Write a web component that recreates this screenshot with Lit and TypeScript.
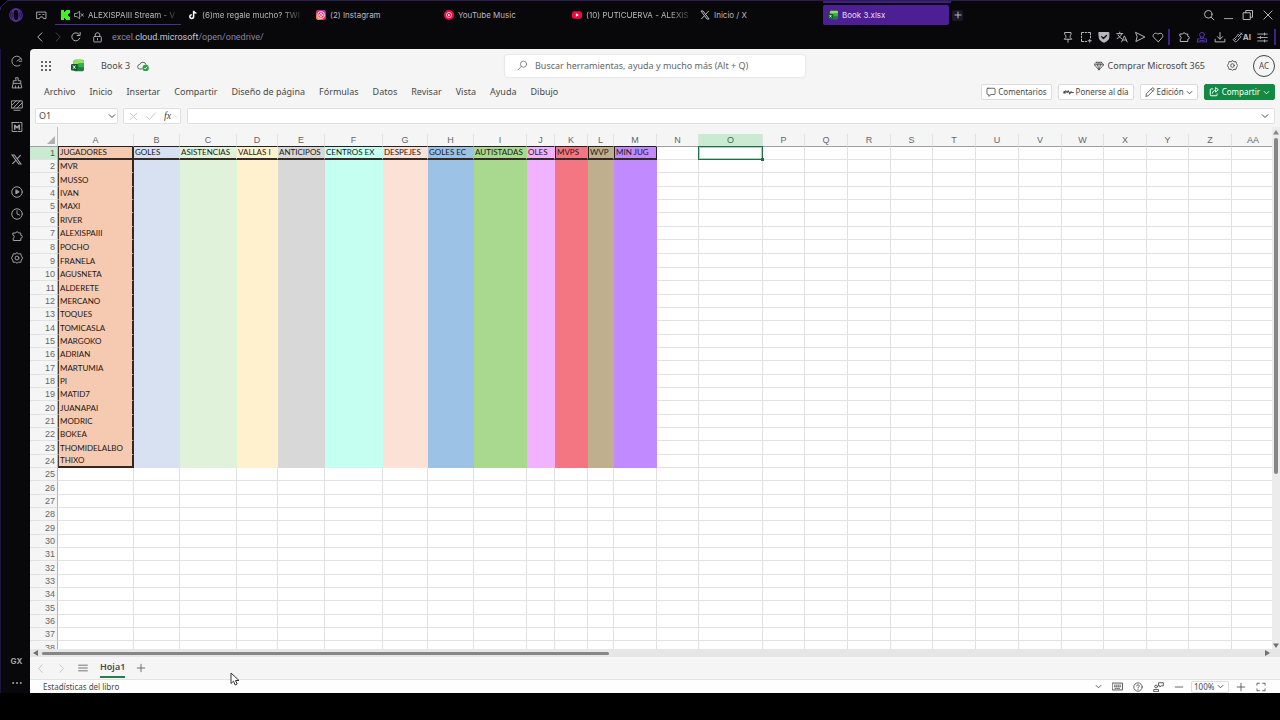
import { LitElement, html, svg, css, nothing, type SVGTemplateResult } from "lit";
import { customElement, state } from "lit/decorators.js";
import { classMap } from "lit/directives/class-map.js";
import { styleMap } from "lit/directives/style-map.js";

// Line icons share a 16 unit grid and take the colour of their text.
const icon = (body: SVGTemplateResult, size = 12, stroke = 1.3) => html`<svg
  class="icon"
  width=${size}
  height=${size}
  viewBox="0 0 16 16"
  fill="none"
  stroke="currentColor"
  stroke-width=${stroke}
  stroke-linecap="round"
  stroke-linejoin="round"
  aria-hidden="true"
>${body}</svg>`;

const PUZZLE = svg`<path d="M3 4h3.2a2 2 0 0 1 3.9 0H13v3a2 2 0 0 1 0 4v3H3v-3.2a2 2 0 0 0 0-3.8z"/>`;

const I = {
  opera: svg`<circle cx="8" cy="8" r="7.2"/><ellipse cx="8" cy="8" rx="3.4" ry="6.6"/><ellipse cx="8" cy="8" rx="5" ry="7"/>`,
  workspace: svg`<path d="M1.5 3h13v9.500h-3.500L9.500 10h-3L5 12.500H1.500z"/><path d="M4.500 6.500h1.500M10 6.500h1.500"/>`,
  mute: svg`<path d="M1.500 5.500h3L9 2v12L4.500 10.500h-3zM11.500 6l3.500 4M15 6l-3.500 4"/>`,
  back: svg`<path d="M10.500 2.500L5 8l5.500 5.500"/>`,
  forward: svg`<path d="M5.500 2.500L11 8l-5.500 5.500"/>`,
  reload: svg`<path d="M13 9.500A5.400 5.400 0 1 1 12 4.300M13.500 2v4h-4"/>`,
  lock: svg`<rect x="2.500" y="6.500" width="11" height="8" rx="1"/><path d="M4.800 6.500V4.200a3.200 3.200 0 0 1 6.400 0v2.300M8 9.500v2"/>`,
  search: svg`<circle cx="7" cy="7" r="5"/><path d="M11 11l3.500 3.500"/>`,
  find: svg`<circle cx="9.500" cy="6" r="4.500"/><path d="M6.300 9.300L1.500 14.300"/>`,
  minimize: svg`<path d="M2 12.500h12"/>`,
  restore: svg`<rect x="2" y="5" width="9" height="9"/><path d="M5 5V2h9v9h-3"/>`,
  close: svg`<path d="M2.500 2.500l11 11M13.500 2.500l-11 11"/>`,
  plus: svg`<path d="M8 2v12M2 8h12"/>`,
  minus: svg`<path d="M2 8h12"/>`,
  pin: svg`<path d="M4 2h8v3l-1.200 1v2.500L13 11H3l2.200-2.500V6L4 5zM8 11v4"/>`,
  snap: svg`<path d="M2 5V2h3M7 2h2M11 2h3v3M14 7v2M2 7v2M2 11v3h3M7 14h2M11 13h4M13 11v4"/>`,
  shield: svg`<path d="M1.500 2h13v6c0 4-3.500 6-6.500 7-3-1-6.500-3-6.500-7z" fill="currentColor"/><path d="M4.800 7.500l2.500 2.500 4-4" stroke="#0a0a0c" stroke-width="1.800"/>`,
  translate: svg`<path d="M1 3.500h8M5 1.500v2M7.500 3.500C7 7 4 9 1.500 10M3 5.500c1 2 2.500 3.500 4.500 4.500M7.500 14.500l3.700-8 3.700 8M8.700 12h5"/>`,
  send: svg`<path d="M2.500 2l12 6-12 6 1.500-6z"/>`,
  heart: svg`<path d="M8 14.200L2.300 8.600C-.6 5.300 4.200.4 8 4.400c3.800-4 8.600.9 5.700 4.200z"/>`,
  puzzle: PUZZLE,
  person: svg`<circle cx="8" cy="5" r="3.200"/><path d="M6 8.500v1.500h4V8.500M2 14.500v-4h2.500M14 14.500v-4h-2.500M2 14.500h12M5 12.500h6"/>`,
  download: svg`<path d="M8 2v8.500M4.500 7.500L8 11l3.500-3.500M1.500 11v3.500h13V11"/>`,
  brush: svg`<path d="M14.500 1.500L9 7M12 1l3 3M9.500 3.500l3.500 3.500-3 3c-1 2-3 4-5 4.500L1.500 11C3 10.500 5 8 6.500 6.500zM4 12l2-2"/>`,
  sliders: svg`<path d="M1 3h14M1 8h14M1 13h14M11 1.500v3M5 6.500v3M11 11.500v3"/>`,
  gauge: svg`<path d="M12 13.500A6.700 6.700 0 1 1 14.200 6M8 8l5-3.500M11 8.500l3.500-.5"/>`,
  broom: svg`<path d="M6.500 1h3v4H13v3.500H3V5h3.500zM3 8.500l-1.500 6h12l1 0-1.500-6M6 14.500v-2.500M10 14.500v-2.500"/>`,
  wallpaper: svg`<rect x="1" y="2.500" width="14" height="9.500"/><path d="M1.500 8L7 2.500M3 12l9-9.500M8 12l6.500-6.500M4 15h8"/>`,
  mods: svg`<rect x="1.500" y="2" width="13" height="12" stroke-dasharray="9 1.500"/><path d="M5 11V5.500l3 3.500 3-3.500V11" stroke-width="2"/>`,
  play: svg`<circle cx="8" cy="8" r="7"/><path d="M6.500 5.500v5l4-2.500z" fill="currentColor"/>`,
  clock: svg`<circle cx="8" cy="8" r="7"/><path d="M8 3.500V8l3.500 1.500"/>`,
  hexgear: svg`<path d="M8 1l2 1.500 3-.2.800 3L15.500 8l-1.700 2.700-.8 3-3-.2L8 15l-2-1.500-3 .2-.8-3L.5 8l1.700-2.700.8-3 3 .2z"/><circle cx="8" cy="8" r="2.600"/>`,
  chevron: svg`<path d="M2.500 5.500L8 11l5.500-5.500"/>`,
  cancel: svg`<path d="M2 2l12 12M14 2L2 14"/>`,
  accept: svg`<path d="M1 9l4.500 4.500L15 3"/>`,
  diamond: svg`<path d="M4 2h8l3.500 4L8 14.500.5 6zM.5 6h15M5.500 6L8 14M10.500 6L8 14M4 2l1.500 4L8 2l2.500 4L12 2"/>`,
  comment: svg`<path d="M3 2h10a1.500 1.500 0 0 1 1.500 1.500v7A1.500 1.500 0 0 1 13 12H8l-3.500 3v-3H3a1.500 1.500 0 0 1-1.500-1.500v-7A1.500 1.500 0 0 1 3 2z"/>`,
  catchup: svg`<path d="M1 8.500L4 5.500l2 2.500 1.500-2.500L10 10l1.500-3 1.500 1h2M1.500 6.500v2h2"/>`,
  pencil: svg`<path d="M1.500 14.500l1-4L11 2a1.700 1.700 0 0 1 3 3l-8.500 8.500zM9.500 3.500l3 3"/>`,
  share: svg`<path d="M6 3H3.500A1.500 1.500 0 0 0 2 4.500v8A1.500 1.500 0 0 0 3.500 14h8a1.500 1.500 0 0 0 1.500-1.500V11M5.500 10c.5-3 2-4.500 5-4.500V8L15 4.500 10.500 1v2.500"/>`,
  menu: svg`<path d="M1 3.500h14M1 8h14M1 12.500h14"/>`,
  keyboard: svg`<rect x=".8" y="3" width="14.400" height="10"/><path d="M3.500 6h9M3.500 8.300h9M4.500 10.700h7" stroke-dasharray="1.200 1.400"/>`,
  help: svg`<circle cx="8" cy="8" r="6.700"/><path d="M6 6.300a2 2 0 1 1 2.800 2c-.6.400-.8.700-.8 1.300M8 11.700v.2"/>`,
  feedback: svg`<circle cx="4.500" cy="8" r="2"/><path d="M1 15v-2.500h7V15zM8.500 2.500h6.500V7h-3l-2 1.700V7H8.500z"/>`,
  fullscreen: svg`<path d="M1.500 5V2h4M10.500 2h4v3M14.500 11v3h-4M5.500 14h-4v-3"/>`,
};

const excelLogo = (size: number) => html`<svg class="icon" width=${size} height=${size} viewBox="0 0 16 16" aria-hidden="true">
  <rect x="3" y="1" width="13" height="14" rx="2" fill="#1f7a3d" />
  <path d="M5 1h9a2 2 0 0 1 2 2v3H3V3a2 2 0 0 1 2-2z" fill="#8fe05a" />
  <path d="M9 5h7v5H9z" fill="#35b04b" />
  <rect x="0" y="6" width="8" height="8" rx="1.500" fill="#0f5a30" />
  <path d="M2.500 8l3 4M5.500 8l-3 4" stroke="#fff" stroke-width="1.200" />
</svg>`;

const xLogo = (size: number) => html`<svg class="icon" width=${size} height=${size} viewBox="0 0 16 16" fill="none" stroke="currentColor" aria-hidden="true">
  <path d="M1.500 1.500h3.300l9.700 13h-3.300z" stroke-width="1.600" /><path d="M14 1.500L9 7M7 9.300L2 14.500" stroke-width="1.600" />
</svg>`;

const FAVICONS = {
  kick: html`<svg class="icon" width="10" height="10" viewBox="0 0 10 10"><path d="M1 0h3v2h1V1h1V0h4v3H9v1H8v2h1v1h1v3H6V9H5V8H4v2H1z" fill="#3df51c" /></svg>`,
  tiktok: html`<svg class="icon" width="10" height="10" viewBox="0 0 16 16" fill="none" stroke-width="2.400">
    <path d="M9 1v9.500a3 3 0 1 1-3-3M9 1.500c.5 2.500 2 3.500 4.500 3.500" stroke="#fff" /></svg>`,
  instagram: html`<svg class="icon" width="10" height="10" viewBox="0 0 16 16">
    <defs><linearGradient id="ig" x1="0" y1="1" x2="1" y2="0"><stop offset="0" stop-color="#ffb640" /><stop offset=".45" stop-color="#f0235c" /><stop offset="1" stop-color="#a32ae0" /></linearGradient></defs>
    <rect width="16" height="16" rx="3.500" fill="url(#ig)" /><g fill="none" stroke="#fff" stroke-width="1.500"><rect x="3" y="3" width="10" height="10" rx="3" /><circle cx="8" cy="8" r="2.300" /></g></svg>`,
  ytmusic: html`<svg class="icon" width="10" height="10" viewBox="0 0 16 16"><circle cx="8" cy="8" r="8" fill="#f4084a" /><circle cx="8" cy="8" r="4.200" fill="none" stroke="#fff" /><path d="M6.700 5.800v4.400L10.200 8z" fill="#fff" /></svg>`,
  youtube: html`<svg class="icon" width="10" height="10" viewBox="0 0 16 16"><rect y="2" width="16" height="12" rx="3.500" fill="#f5063f" /><path d="M6.200 5.200v5.600L11 8z" fill="#fff" /></svg>`,
  x: xLogo(10),
  excel: excelLogo(10),
};

interface Tab {
  icon: keyof typeof FAVICONS;
  title: string;
  muted?: boolean;
  marked?: boolean;
  faded?: boolean;
  active?: boolean;
}

const TABS: Tab[] = [
  { icon: "kick", title: "ALEXISPAIII Stream - V", muted: true, marked: true, faded: true },
  { icon: "tiktok", title: "(6)me regale mucho? TWI", faded: true },
  { icon: "instagram", title: "(2) Instagram" },
  { icon: "ytmusic", title: "YouTube Music" },
  { icon: "youtube", title: "(10) PUTICUERVA - ALEXIS", faded: true },
  { icon: "x", title: "Inicio / X" },
  { icon: "excel", title: "Book 3.xlsx", active: true },
];

const MENUS = ["Archivo", "Inicio", "Insertar", "Compartir", "Diseño de página", "Fórmulas", "Datos", "Revisar", "Vista", "Ayuda", "Dibujo"];

interface Column {
  id: string;
  width: number;
  title?: string;
  fill?: string;
  boxed?: boolean;
}

const COLUMNS: Column[] = [
  { id: "A", width: 76, title: "JUGADORES", fill: "#f5cab1" },
  { id: "B", width: 46, title: "GOLES", fill: "#d8e1f1" },
  { id: "C", width: 57, title: "ASISTENCIAS", fill: "#e1f2da" },
  { id: "D", width: 41, title: "VALLAS I", fill: "#fff1cd" },
  { id: "E", width: 47, title: "ANTICIPOS", fill: "#d8d8d8" },
  { id: "F", width: 58, title: "CENTROS EX", fill: "#c4fff2" },
  { id: "G", width: 45, title: "DESPEJES", fill: "#fbe1d6" },
  { id: "H", width: 46, title: "GOLES EC", fill: "#9cc3e6" },
  { id: "I", width: 53, title: "AUTISTADAS", fill: "#a8d98f" },
  { id: "J", width: 28, title: "OLES", fill: "#f1b2ff" },
  { id: "K", width: 33, title: "MVPS", fill: "#f57683", boxed: true },
  { id: "L", width: 26, title: "WVP", fill: "#bfaf8f", boxed: true },
  { id: "M", width: 43, title: "MIN JUG", fill: "#c18aff", boxed: true },
  { id: "N", width: 42 },
  { id: "O", width: 64 },
  { id: "P", width: 42 },
  { id: "Q", width: 43 },
  { id: "R", width: 43 },
  { id: "S", width: 42 },
  { id: "T", width: 43 },
  { id: "U", width: 43 },
  { id: "V", width: 43 },
  { id: "W", width: 42 },
  { id: "X", width: 43 },
  { id: "Y", width: 42 },
  { id: "Z", width: 43 },
  { id: "AA", width: 43 },
];
const STUB = 28;
const TOTAL = COLUMNS.reduce((sum, c) => sum + c.width, STUB);

const PLAYERS = [
  "MVR", "MUSSO", "IVAN", "MAXI", "RIVER", "ALEXISPAIII", "POCHO", "FRANELA", "AGUSNETA", "ALDERETE", "MERCANO", "TOQUES",
  "TOMICASLA", "MARGOKO", "ADRIAN", "MARTUMIA", "PI", "MATID7", "JUANAPAI", "MODRIC", "BOKEA", "THOMIDELALBO", "THIXO",
];
const LAST_ROW = PLAYERS.length + 1;
const ROWS = Array.from({ length: 38 }, (_, i) => i + 1);

@customElement("sheet-grid")
class SheetGrid extends LitElement {
  static styles = css`
    :host {
      display: block;
      overflow: hidden;
      padding-top: 7px;
      background: #f5f5f5;
    }
    table {
      table-layout: fixed;
      border-collapse: separate;
      border-spacing: 0;
      background: #fff;
      font: 8px/12px Lato, Carlito, sans-serif;
      color: #1d1712;
    }
    th, td {
      box-sizing: border-box;
      height: 13px;
      padding: 0;
      white-space: nowrap;
      border: 0 solid #e2e2e2;
      border-width: 0 1px 1px 0;
    }
    th {
      background: #f5f5f5;
      color: #666;
      font: 9px/12px "Liberation Sans", Arial, sans-serif;
    }
    thead th { border-bottom-color: #a0a0a0; }
    thead .used { border-bottom-color: #222; }
    .row:nth-child(-n + 9):nth-child(3n) > *,
    .row:nth-child(n + 8):nth-child(3n + 2) > * { height: 14px; }
    .corner { position: relative; border-right-color: #bdbdbd; }
    .corner::before {
      content: "";
      position: absolute;
      right: -1px;
      bottom: 100%;
      width: 1px;
      height: 7px;
      background: #bdbdbd;
    }
    .corner svg { display: block; margin-left: auto; margin-right: 2px; }
    .num { text-align: right; padding-right: 2px; border-right-color: #b4b4b4; }
    .on { background: #caead2; color: #35704b; }
    thead .on { border-bottom-color: #1d7044; }
    td { padding-left: 1px; }
    .filled { border-color: transparent; }
    .head { border-bottom: 2px solid #332a26; line-height: 11px; }
    .boxed { border-left: 1px solid #222; }
    .boxed.end { border-right: 1px solid #222; }
    .name { border-left: 1px solid #4a3a33; border-right: 2px solid #33261f; }
    .name.last { border-bottom: 2px solid #33261f; line-height: 11px; }
    .cursor { position: relative; }
    .cursor::after, .cursor::before { content: ""; position: absolute; }
    .cursor::after { inset: -1px -1px -1px -1px; border: 1px solid #1d7044; box-shadow: inset 0 0 0 1px #1d704455; }
    .cursor::before { right: -2px; bottom: -2px; width: 3px; height: 3px; background: #1d7044; }
  `;

  private cell(col: Column, c: number, row: number) {
    const filled = Boolean(col.fill) && row <= LAST_ROW;
    const text = row === 1 ? col.title : c === 0 ? PLAYERS[row - 2] : undefined;
    const classes = {
      filled,
      head: row === 1 && filled,
      boxed: row === 1 && Boolean(col.boxed),
      end: col.id === "M",
      name: c === 0 && filled,
      last: row === LAST_ROW,
      cursor: row === 1 && col.id === "O",
    };
    return html`<td class=${classMap(classes)} style=${filled ? styleMap({ backgroundColor: col.fill! }) : nothing}>${text ?? nothing}</td>`;
  }

  render() {
    return html`<table aria-label="Hoja1" style=${styleMap({ width: `${TOTAL}px` })}>
      <colgroup>
        <col style=${styleMap({ width: `${STUB}px` })} />
        ${COLUMNS.map((c) => html`<col style=${styleMap({ width: `${c.width}px` })} />`)}
      </colgroup>
      <thead>
        <tr>
          <th class="corner"><svg width="8" height="8" viewBox="0 0 8 8"><path d="M8 0v8H0z" fill="#b0b0b0" /></svg></th>
          ${COLUMNS.map((c) => html`<th scope="col" class=${classMap({ on: c.id === "O", used: !!c.fill })}>${c.id}</th>`)}
        </tr>
      </thead>
      <tbody>
        ${ROWS.map(
          (r) => html`<tr class="row">
            <th scope="row" class=${classMap({ num: true, on: r === 1 })}>${r}</th>
            ${COLUMNS.map((col, c) => this.cell(col, c, r))}
          </tr>`,
        )}
      </tbody>
    </table>`;
  }
}

@customElement("app-root")
class AppRoot extends LitElement {
  @state() private cellRef = "O1";

  static styles = css`
    :host {
      display: block;
      height: 100vh;
      overflow: hidden;
      background: #000;
      font-family: "Noto Sans", "Segoe UI", sans-serif;
      font-size: 9px;
      line-height: 12px;
      color: #444;
    }
    * { box-sizing: border-box; }
    button, input, select { font: inherit; color: inherit; background: none; border: 0; padding: 0; margin: 0; }
    button { display: inline-flex; align-items: center; justify-content: center; white-space: nowrap; }
    a { color: inherit; text-decoration: none; }
    .icon { display: block; flex: none; }
    .window {
      position: relative;
      display: grid;
      grid-template: 49px minmax(0, 1fr) / 30px minmax(0, 1fr);
      height: calc(100vh - 27px);
      background: #08080a;
      color: #b9b8bf;
    }
    .edge { position: absolute; inset: 0 auto auto 0; pointer-events: none; }
    .chrome {
      grid-column: 1 / -1;
      display: grid;
      grid-template-rows: 25px 22px;
      border-top: 1px solid #2c1c52;
      font: 8px/12px Inter, sans-serif;
    }
    .strip, .address { display: flex; align-items: center; min-width: 0; }
    .strip { padding: 3px 6px 0 9px; }
    .brand { color: #5a2fa8; width: 14px; margin-right: 12px; }
    .space { width: 12px; margin-right: 8px; }
    .tabs { display: flex; flex: 0 1 896px; min-width: 0; height: 20px; margin: 0; padding: 0; list-style: none; }
    .tab { position: relative; flex: 0 1 128px; min-width: 0; padding-right: 2px; }
    .tab a { display: flex; align-items: center; gap: 4px; height: 20px; padding: 0 0 0 5px; }
    .tab .title { min-width: 0; overflow: hidden; white-space: nowrap; }
    .faded .title { mask-image: linear-gradient(90deg, #000 80%, #0004); }
    .marked a { border-bottom: 1px solid #43309a; }
    .active a { background: #4c1f95; color: #e6def5; border-radius: 2px; }
    .active::before { content: ""; position: absolute; inset: -4px 0 auto 0; height: 2px; background: #3f1f86; }
    .newtab { width: 11px; height: 11px; margin-left: 1px; background: #1b1726; border-radius: 2px; }
    .controls { display: flex; gap: 8px; margin-left: auto; }
    .address { padding: 0 4px 0 34px; }
    .nav { display: flex; gap: 6px; margin-right: 10px; }
    .dim { opacity: 0.35; }
    .lock { margin-right: 9px; }
    .url { flex: 1; min-width: 0; font: 9px/12px Roboto, sans-serif; color: #8b87a0; }
    .url b { font-weight: 400; color: #c9c8d0; }
    .tools { display: flex; align-items: center; gap: 6px; }
    .bar { width: 2px; height: 16px; background: #3b238a; }
    .bar.mid { margin-right: 2px; margin-left: -2px; }
    .purple { color: #5330b5; }
    .ai { gap: 0; font: 700 8px/12px Inter, sans-serif; }
    .side { display: flex; flex-direction: column; align-items: center; gap: 10px; padding: 6px 0 4px 2px; border-left: 1px solid #1d1440; color: #a3a2a9; }
    .side .apart { margin-top: 11px; }
    .side .gx { margin-top: auto; font: 700 8px/12px Inter, sans-serif; }
    .page { display: flex; flex-direction: column; min-height: 0; min-width: 0; background: #f5f5f5; border-top-left-radius: 4px; overflow: hidden; color: #484848; }
    .titlebar { display: grid; grid-template-columns: 1fr 300px 1fr; align-items: center; height: 33px; padding: 0 5px; }
    .file { display: flex; align-items: center; padding-left: 5px; }
    .waffle { margin-right: 19px; }
    .file .doc { margin: 0 7px 0 17px; }
    .search { display: flex; align-items: center; gap: 7px; height: 22px; padding: 0 12px; background: #fff; border-radius: 3px; box-shadow: 0 0 2px #00000030; color: #777; }
    .search input { flex: 1; min-width: 0; outline: 0; }
    .search input::placeholder { color: #666; opacity: 1; }
    .account { display: flex; align-items: center; justify-content: flex-end; }
    .buy { gap: 4px; margin-right: 22px; }
    .avatar { width: 22px; height: 22px; margin-left: 15px; border: 1px solid #444; border-radius: 50%; font-size: 8px; }
    .ribbon { display: flex; align-items: center; justify-content: space-between; height: 20px; padding: 0 5px 0 14px; }
    .menus { display: flex; gap: 14px; white-space: nowrap; }
    .actions { display: flex; gap: 6px; font-size: 8px; }
    .actions button { height: 16px; gap: 2px; padding: 0 4px; border: 1px solid #dcdcdc; border-radius: 2px; background: #fff; }
    .actions .share { gap: 3px; background: #138a43; border-color: #138a43; color: #fff; }
    .formula { display: flex; padding: 6px 5px 3px; }
    .box { display: flex; align-items: center; height: 16px; background: #fff; border: 1px solid #e0e0e0; border-radius: 2px; }
    .ref { width: 83px; padding: 0 1px 0 3px; }
    .ref input { flex: 1; min-width: 0; outline: 0; }
    .fx { width: 58px; margin: 0 6px 0 5px; padding: 0 5px; gap: 8px; color: #bbb; }
    .fx i { color: #444; font-family: "Liberation Serif", serif; font-size: 10px; }
    .fx .pair { gap: 3px; }
    .text { flex: 1; padding-right: 5px; }
    .text input { flex: 1; outline: 0; }
    .sheet { flex: 1; min-height: 0; display: grid; grid-template: minmax(0, 1fr) 8px / minmax(0, 1fr) 8px; background: #e6e6e6; }
    .vbar { display: flex; flex-direction: column; align-items: center; gap: 3px; padding: 3px 0 1px; background: #ececec; }
    .hbar { grid-column: 1 / -1; display: flex; align-items: center; gap: 4px; padding: 0 10px 0 3px; }
    .track { flex: 1; min-height: 0; }
    .thumb { background: #868686; border-radius: 2px; }
    .hbar .thumb { width: 46.5%; height: 3px; }
    .vbar .thumb { width: 4px; height: 67%; }
    .sheets { display: flex; align-items: center; height: 22px; padding-left: 5px; }
    .sheets .icon { color: #555; }
    .sheets .faint .icon { color: #c4c4c4; }
    .faint { margin-right: 10px; }
    .faint + :not(.faint) { margin-left: 1px; }
    .current { margin: 0 11px 0 12px; height: 20px; border-bottom: 2px solid #2a7d4f; font-weight: 600; }
    .status { display: flex; align-items: center; justify-content: space-between; height: 14px; padding: 0 14px 0 13px; background: #fefefe; border-top: 1px solid #e4e4e4; font-size: 8px; }
    .view { display: flex; align-items: center; gap: 10px; }
    .zoom { position: relative; display: flex; align-items: center; width: 38px; height: 12px; margin: 0 -3px; border: 1px solid #ddd; border-radius: 2px; }
    .zoom select { appearance: none; width: 100%; padding-left: 2px; outline: 0; }
    .zoom .icon { position: absolute; right: 4px; pointer-events: none; }
    .pointer { position: absolute; left: 230px; top: 672px; pointer-events: none; }
  `;

  private tool(body: SVGTemplateResult, label: string, size = 12, cls = "", stroke = 1.3) {
    return html`<button class=${cls} aria-label=${label}>${icon(body, size, stroke)}</button>`;
  }

  private chrome() {
    return html`<header class="chrome">
      <div class="strip">
        <button class="brand" aria-label="Opera GX">${icon(I.opera, 14, 1.2)}</button>
        <button class="space" aria-label="Espacios">${icon(I.workspace, 11)}</button>
        <ul class="tabs">
          ${TABS.map(
            (t) => html`<li class=${classMap({ tab: true, marked: !!t.marked, faded: !!t.faded, active: !!t.active })}>
              <a href="#">${FAVICONS[t.icon]}${t.muted ? icon(I.mute, 10) : nothing}<span class="title">${t.title}</span></a>
            </li>`,
          )}
        </ul>
        <button class="newtab" aria-label="Nueva pestaña">${icon(I.plus, 8, 2)}</button>
        <div class="controls">
          ${this.tool(I.search, "Buscar")}${this.tool(I.minimize, "Minimizar", 11)}${this.tool(I.restore, "Restaurar")}${this.tool(I.close, "Cerrar")}
        </div>
      </div>
      <div class="address">
        <div class="nav">
          ${this.tool(I.back, "Atrás")}${this.tool(I.forward, "Adelante", 12, "dim")}${this.tool(I.reload, "Recargar")}
        </div>
        <span class="lock">${icon(I.lock, 11)}</span>
        <span class="url">excel.<b>cloud.microsoft</b>/open/onedrive/</span>
        <div class="tools">
          ${this.tool(I.pin, "Fijar")}${this.tool(I.snap, "Captura")}${this.tool(I.shield, "Protección")}${this.tool(I.translate, "Traducir")}${this.tool(I.send, "Enviar")}${this.tool(I.heart, "Favoritos")}
          <span class="bar mid"></span>
          ${this.tool(I.puzzle, "Extensiones")}${this.tool(I.person, "Perfil", 12, "purple")}${this.tool(I.download, "Descargas")}
          <button class="ai">${icon(I.brush, 11)}AI</button>
          ${this.tool(I.sliders, "Ajustes rápidos", 11)}
          <span class="bar"></span>
        </div>
      </div>
    </header>`;
  }

  private side() {
    return html`<nav class="side" aria-label="Barra lateral">
      ${this.tool(I.gauge, "GX Control")}${this.tool(I.broom, "GX Cleaner")}${this.tool(I.wallpaper, "Fondos")}${this.tool(I.mods, "Mods")}
      <button class="apart" aria-label="X">${xLogo(11)}</button>
      ${this.tool(I.play, "Reproductor", 12, "apart")}${this.tool(I.clock, "Historial")}${this.tool(I.puzzle, "Extensiones")}${this.tool(I.hexgear, "Configuración")}
      <button class="gx">GX</button>
      <button aria-label="Más"><svg class="icon" width="10" height="12" viewBox="0 0 10 12" fill="currentColor"><circle cx="1.200" cy="6" r="1" /><circle cx="5" cy="6" r="1" /><circle cx="8.800" cy="6" r="1" /></svg></button>
    </nav>`;
  }

  private page() {
    return html`<main class="page">
      <div class="titlebar">
        <div class="file">
          <button class="waffle" aria-label="Aplicaciones"><svg class="icon" width="12" height="12" viewBox="0 0 12 12" fill="#333">
            ${[1, 5, 9].map((y) => [1, 5, 9].map((x) => svg`<rect x=${x} y=${y} width="2" height="2" rx="1" />`))}
          </svg></button>
          ${excelLogo(13)}
          <span class="doc">Book 3</span>
          <svg class="icon" width="12" height="12" viewBox="0 0 16 16" fill="none" aria-hidden="true">
            <path d="M7 12H4a3 3 0 0 1-.3-6A4.300 4.300 0 0 1 12 6.200" stroke="#555" stroke-width="1.200" />
            <circle cx="11.500" cy="10.500" r="4.300" fill="#2ba245" /><path d="M9.500 10.500l1.500 1.500 2.500-3" stroke="#fff" stroke-width="1.200" />
          </svg>
        </div>
        <label class="search">${icon(I.find, 11, 1.2)}<input type="search" aria-label="Buscar" placeholder="Buscar herramientas, ayuda y mucho más (Alt + Q)" /></label>
        <div class="account">
          <button class="buy">${icon(I.diamond, 10)}Comprar Microsoft 365</button>
          ${this.tool(I.hexgear, "Configuración", 11)}
          <button class="avatar">AC</button>
        </div>
      </div>
      <div class="ribbon">
        <nav class="menus">${MENUS.map((m) => html`<button>${m}</button>`)}</nav>
        <div class="actions">
          <button>${icon(I.comment, 10)}Comentarios</button>
          <button>${icon(I.catchup, 11, 1.6)}Ponerse al día</button>
          <button>${icon(I.pencil, 10)}Edición${icon(I.chevron, 7, 2)}</button>
          <button class="share">${icon(I.share, 10, 1.6)}Compartir${icon(I.chevron, 7, 2)}</button>
        </div>
      </div>
      <div class="formula">
        <div class="box ref">
          <input aria-label="Cuadro de nombres" .value=${this.cellRef} @input=${(e: InputEvent) => (this.cellRef = (e.target as HTMLInputElement).value)} />
          ${this.tool(I.chevron, "Nombres", 8, "", 2)}
        </div>
        <div class="box fx">
          ${this.tool(I.cancel, "Cancelar", 9)}${this.tool(I.accept, "Aceptar", 10)}
          <button class="pair" aria-label="Insertar función"><i>fx</i>${icon(I.chevron, 5)}</button>
        </div>
        <div class="box text"><input aria-label="Barra de fórmulas" />${this.tool(I.chevron, "Expandir", 8, "", 2)}</div>
      </div>
      <div class="sheet">
        <sheet-grid></sheet-grid>
        <div class="vbar">
          <svg width="6" height="5" viewBox="0 0 6 5"><path d="M0 4.500h6L3 0z" fill="#868686" /></svg>
          <div class="track"><div class="thumb"></div></div>
          <svg width="6" height="5" viewBox="0 0 6 5"><path d="M0 .5h6L3 5z" fill="#707070" /></svg>
        </div>
        <div class="hbar">
          <svg width="5" height="6" viewBox="0 0 5 6"><path d="M5 0v6L0 3z" fill="#707070" /></svg>
          <div class="track"><div class="thumb"></div></div>
          <svg width="5" height="6" viewBox="0 0 5 6"><path d="M0 0v6l5-3z" fill="#707070" /></svg>
        </div>
      </div>
      <div class="sheets">
        ${this.tool(I.back, "Anterior", 11, "faint")}${this.tool(I.forward, "Siguiente", 11, "faint")}${this.tool(I.menu, "Todas las hojas", 10)}
        <button class="current">Hoja1</button>
        ${this.tool(I.plus, "Nueva hoja", 10)}
      </div>
      <footer class="status">
        <span>Estadísticas del libro</span>
        <div class="view">
          ${this.tool(I.chevron, "Opciones", 7, "", 2)}${this.tool(I.keyboard, "Teclado", 11)}${this.tool(I.help, "Ayuda", 10)}${this.tool(I.feedback, "Comentarios", 11)}${this.tool(I.minus, "Alejar", 10)}
          <div class="zoom"><select aria-label="Zoom"><option>100%</option></select>${icon(I.chevron, 7, 2)}</div>
          ${this.tool(I.plus, "Acercar", 10)}${this.tool(I.fullscreen, "Pantalla completa", 10)}
        </div>
      </footer>
    </main>`;
  }

  render() {
    return html`<div class="window">
        ${this.chrome()}${this.side()}${this.page()}
        <svg class="edge" width="10" height="10" viewBox="0 0 10 10" aria-hidden="true"><path d="M0 0h8L0 7z" fill="#000" /><path d="M.5 10V7L8 .5h2" fill="none" stroke="#35216b" /></svg>
      </div>
      <svg class="pointer" width="10" height="14" viewBox="0 0 10 14" aria-hidden="true"><path d="M1 1v10.500l2.500-2.300L5.200 13l2-1-1.700-3.500H9z" fill="#fff" stroke="#333" /></svg>`;
  }
}
